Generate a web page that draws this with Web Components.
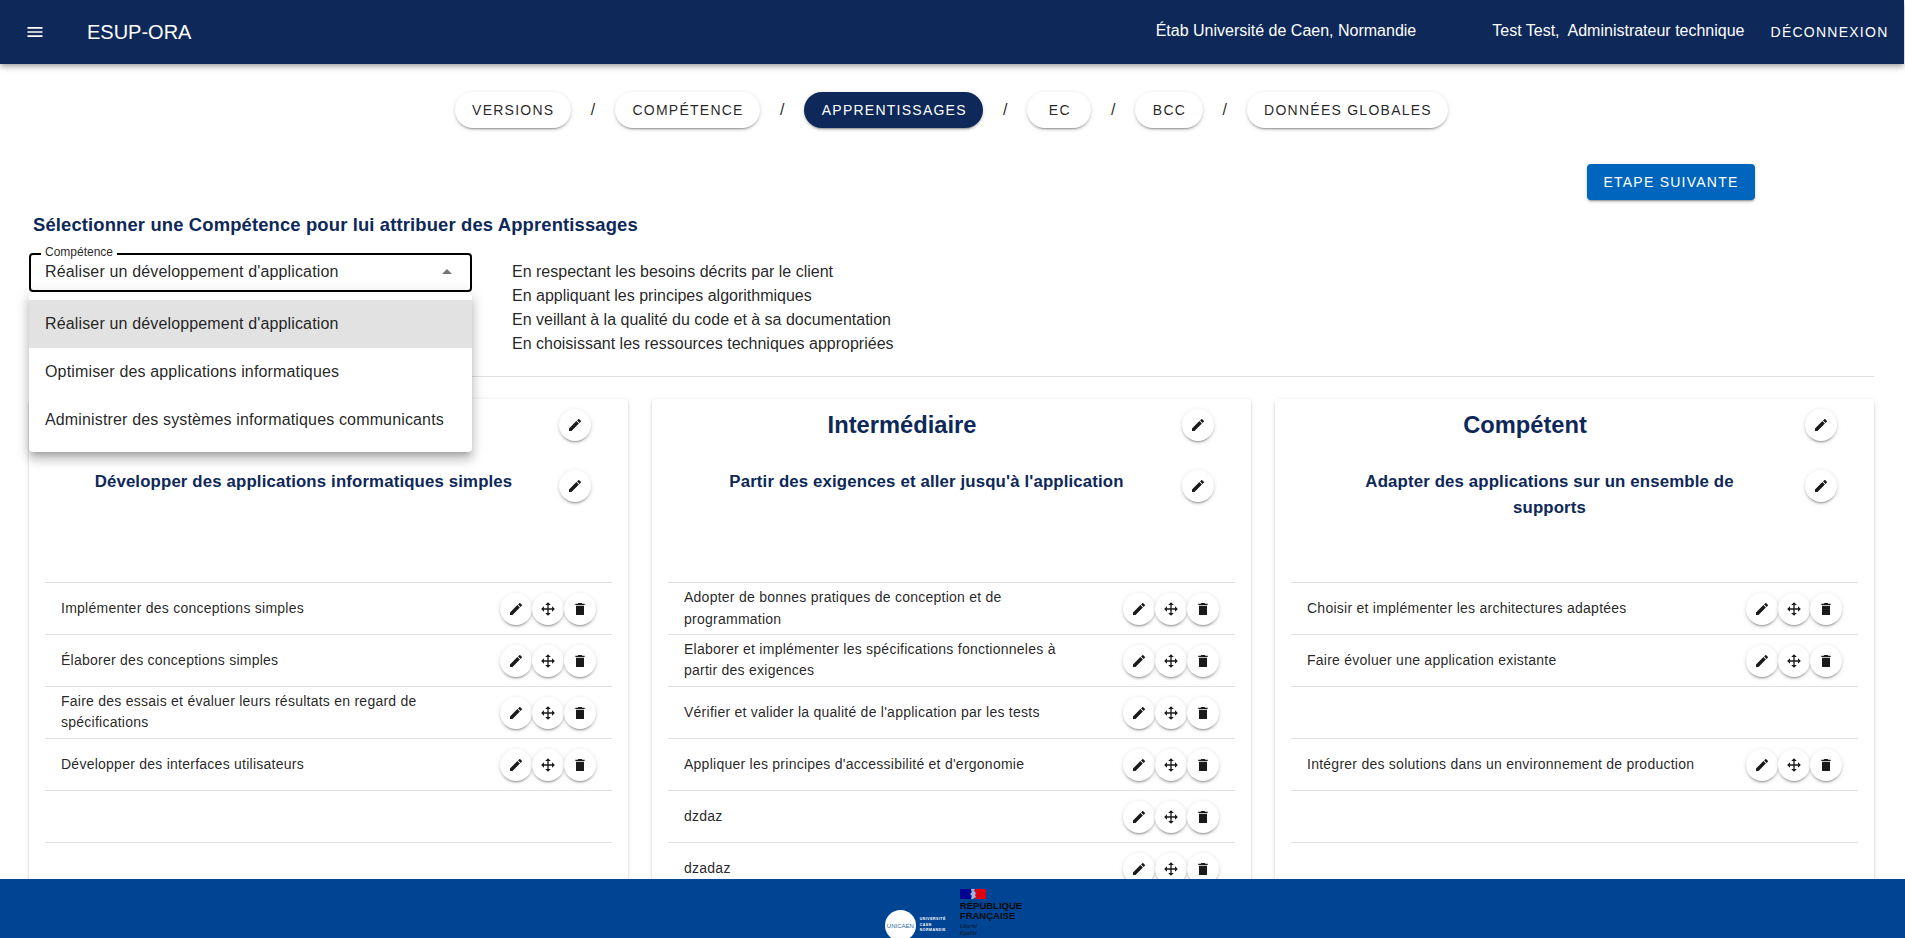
<!DOCTYPE html>
<html lang="fr">
<head>
<meta charset="utf-8">
<title>ESUP-ORA</title>
<style>
  html, body { margin: 0; height: 100%; }
  body {
    display: flex;
    flex-direction: column;
    height: 938px;
    overflow: hidden;
    font-family: "Liberation Sans", Arial, sans-serif;
    color: rgba(0, 0, 0, .87);
    background: #fff;
  }
  main {
    flex: 1;
    min-height: 0;
    overflow: hidden;
    padding: 0 31px 0 29px;
  }
</style>
</head>
<body>
  <app-header></app-header>
  <main>
    <step-nav>
      <step-tab>Versions</step-tab>
      <step-tab>Compétence</step-tab>
      <step-tab active>Apprentissages</step-tab>
      <step-tab>EC</step-tab>
      <step-tab>BCC</step-tab>
      <step-tab>Données globales</step-tab>
    </step-nav>
    <next-step>Etape suivante</next-step>
    <competence-panel></competence-panel>
    <level-board>
      <level-card title="" sub="Développer des applications informatiques simples">
        <skill-row>Implémenter des conceptions simples</skill-row>
        <skill-row>Élaborer des conceptions simples</skill-row>
        <skill-row>Faire des essais et évaluer leurs résultats en regard de spécifications</skill-row>
        <skill-row>Développer des interfaces utilisateurs</skill-row>
        <skill-row empty></skill-row>
        <skill-row empty></skill-row>
      </level-card>
      <level-card title="Intermédiaire" sub="Partir des exigences et aller jusqu'à l'application">
        <skill-row>Adopter de bonnes pratiques de conception et de programmation</skill-row>
        <skill-row>Elaborer et implémenter les spécifications fonctionneles à partir des exigences</skill-row>
        <skill-row>Vérifier et valider la qualité de l'application par les tests</skill-row>
        <skill-row>Appliquer les principes d'accessibilité et d'ergonomie</skill-row>
        <skill-row>dzdaz</skill-row>
        <skill-row>dzadaz</skill-row>
      </level-card>
      <level-card title="Compétent" sub="Adapter des applications sur un ensemble de supports">
        <skill-row>Choisir et implémenter les architectures adaptées</skill-row>
        <skill-row>Faire évoluer une application existante</skill-row>
        <skill-row empty></skill-row>
        <skill-row>Intégrer des solutions dans un environnement de production</skill-row>
        <skill-row empty></skill-row>
        <skill-row empty></skill-row>
      </level-card>
    </level-board>
  </main>
  <app-footer></app-footer>

<script>
const ICONS = {
  menu: "M3 18h18v-2H3v2zm0-5h18v-2H3v2zm0-7v2h18V6H3z",
  edit: "M20.71 7.04c.39-.39.39-1.04 0-1.41l-2.34-2.34c-.37-.39-1.02-.39-1.41 0l-1.84 1.83 3.75 3.75M3 17.25V21h3.75L17.81 9.93l-3.75-3.75L3 17.25z",
  move: "M13 6v5h5V7.75L22.25 12 18 16.25V13h-5v5h3.25L12 22.25 7.75 18H11v-5H6v3.25L1.75 12 6 7.75V11h5V6H7.75L12 1.75 16.25 6H13z",
  trash: "M6 7h12v14H6zM5 4h3.5l1-1h5l1 1H19v2H5z",
  up: "M7 14l5-5 5 5z",
};
const svgIcon = (name, size) =>
  `<svg width="${size}" height="${size}" viewBox="0 0 24 24" fill="currentColor"><path d="${ICONS[name]}"/></svg>`;

class AppHeader extends HTMLElement {
  constructor() {
    super();
    this.attachShadow({ mode: "open" }).innerHTML = `
    <style>
      :host {
        display: flex;
        align-items: center;
        flex: none;
        height: 64px;
        position: relative;
        z-index: 3;
        background: #0d2859;
        color: #fff;
        font-size: 16px;
        box-shadow: 0 2px 4px -1px rgba(0,0,0,.2), 0 4px 5px rgba(0,0,0,.14), 0 1px 10px rgba(0,0,0,.12);
        margin-right: 1px;
      }
      .menu { display: flex; margin-left: 25px; }
      .brand { font-size: 20px; margin-left: 42px; }
      .etab { margin-left: auto; margin-bottom: 2px; }
      .user { margin-left: 76px; margin-bottom: 2px; white-space: pre; }
      .logout {
        margin: 0 15.5px 0 26px;
        font-size: 14px;
        letter-spacing: 1.25px;
      }
    </style>
    <span class="menu">${svgIcon("menu", 20)}</span>
    <span class="brand">ESUP-ORA</span>
    <span class="etab">Étab Université de Caen, Normandie</span>
    <span class="user">Test Test,  Administrateur technique</span>
    <span class="logout">DÉCONNEXION</span>`;
  }
}

class StepNav extends HTMLElement {
  constructor() {
    super();
    this.attachShadow({ mode: "open" }).innerHTML = `
    <style>
      :host {
        display: flex;
        justify-content: center;
        align-items: center;
        margin-top: 28px;
        height: 36px;
      }
    </style>
    <slot></slot>`;
  }
}

class StepTab extends HTMLElement {
  constructor() {
    super();
    this.attachShadow({ mode: "open" }).innerHTML = `
    <style>
      :host { display: flex; align-items: center; }
      :host(:not(:last-child))::after {
        content: "/";
        width: 44px;
        text-align: center;
        font-size: 16px;
        color: rgba(0,0,0,.87);
      }
      .pill {
        height: 36px;
        min-width: 64px;
        box-sizing: border-box;
        padding: 0 16.5px 0 17.5px;
        display: flex;
        align-items: center;
        justify-content: center;
        border-radius: 18px;
        background: #fff;
        color: rgba(0,0,0,.87);
        font-size: 14px;
        letter-spacing: 1.25px;
        text-transform: uppercase;
        box-shadow: 0 3px 1px -2px rgba(0,0,0,.2), 0 2px 2px rgba(0,0,0,.14), 0 1px 5px rgba(0,0,0,.12);
      }
      :host([active]) .pill { background: #0d2859; color: #fff; }
    </style>
    <span class="pill"><slot></slot></span>`;
  }
}

class NextStep extends HTMLElement {
  constructor() {
    super();
    this.attachShadow({ mode: "open" }).innerHTML = `
    <style>
      :host {
        display: flex;
        justify-content: flex-end;
        margin: 36px 119px 0 0;
      }
      span {
        height: 36px;
        width: 168px;
        display: flex;
        align-items: center;
        justify-content: center;
        border-radius: 4px;
        background: #0066bd;
        color: #fff;
        font-size: 14px;
        letter-spacing: 1.25px;
        text-transform: uppercase;
        box-shadow: 0 3px 1px -2px rgba(0,0,0,.2), 0 2px 2px rgba(0,0,0,.14), 0 1px 5px rgba(0,0,0,.12);
      }
    </style>
    <span><slot></slot></span>`;
  }
}

class CompetencePanel extends HTMLElement {
  constructor() {
    super();
    const options = [
      "Réaliser un développement d'application",
      "Optimiser des applications informatiques",
      "Administrer des systèmes informatiques communicants",
    ];
    const criteria = [
      "En respectant les besoins décrits par le client",
      "En appliquant les principes algorithmiques",
      "En veillant à la qualité du code et à sa documentation",
      "En choisissant les ressources techniques appropriées",
    ];
    this.attachShadow({ mode: "open" }).innerHTML = `
    <style>
      :host {
        display: block;
        padding-bottom: 20px;
        border-bottom: 1px solid #e0e0e0;
      }
      h2 {
        margin: 14px 0 0 4px;
        font-size: 18.4px;
        line-height: 22px;
        color: #0d2859;
        letter-spacing: .15px;
      }
      .row { display: flex; margin-top: 17px; }
      .select {
        position: relative;
        width: 443px;
        height: 39px;
        box-sizing: border-box;
        border: 2px solid #000;
        border-radius: 4px;
        font-size: 16px;
        letter-spacing: .15px;
        display: flex;
        align-items: center;
        padding: 0 14px 2px;
        justify-content: space-between;
      }
      .label {
        position: absolute;
        left: 10px;
        top: -10px;
        padding: 0 4px;
        background: #fff;
        font-size: 12px;
        line-height: 14px;
        letter-spacing: 0;
      }
      .arrow { display: flex; color: rgba(0,0,0,.54); margin-right: -3px; }
      .menu {
        position: absolute;
        z-index: 2;
        left: -2px;
        right: -2px;
        top: 37px;
        padding: 8px 0;
        background: #fff;
        border-radius: 4px;
        box-shadow: 0 5px 5px -3px rgba(0,0,0,.2), 0 8px 10px 1px rgba(0,0,0,.14), 0 3px 14px 2px rgba(0,0,0,.12);
      }
      .menu div { height: 48px; line-height: 48px; padding: 0 16px; }
      .menu .on { background: #e2e2e2; }
      .criteria { margin: 0 0 0 40px; padding: 0; list-style: none; font-size: 16px; line-height: 24px; }
      .criteria li:first-child { margin-top: 7px; }
    </style>
    <h2>Sélectionner une Compétence pour lui attribuer des Apprentissages</h2>
    <div class="row">
      <div class="select">
        <span class="label">Compétence</span>
        <span>${options[0]}</span>
        <span class="arrow">${svgIcon("up", 24)}</span>
        <div class="menu">
          ${options.map((o, i) => `<div class="${i === 0 ? "on" : ""}">${o}</div>`).join("")}
        </div>
      </div>
      <ul class="criteria">${criteria.map((c) => `<li>${c}</li>`).join("")}</ul>
    </div>`;
  }
}

class LevelBoard extends HTMLElement {
  constructor() {
    super();
    this.attachShadow({ mode: "open" }).innerHTML = `
    <style>
      :host {
        display: grid;
        grid-template-columns: repeat(3, 1fr);
        gap: 24px;
        margin-top: 22px;
      }
    </style>
    <slot></slot>`;
  }
}

class RoundBtn extends HTMLElement {
  constructor() {
    super();
    this.attachShadow({ mode: "open" });
  }

  connectedCallback() {
    this.shadowRoot.innerHTML = `
    <style>
      :host {
        display: flex;
        flex: none;
        align-items: center;
        justify-content: center;
        width: 32px;
        height: 32px;
        border-radius: 50%;
        background: #fff;
        color: #1a1a1a;
        box-shadow: 0 3px 1px -2px rgba(0,0,0,.2), 0 2px 2px rgba(0,0,0,.14), 0 1px 5px rgba(0,0,0,.12);
      }
    </style>
    ${svgIcon(this.getAttribute("icon"), 16)}`;
  }
}

class LevelCard extends HTMLElement {
  constructor() {
    super();
    this.attachShadow({ mode: "open" });
  }

  connectedCallback() {
    this.shadowRoot.innerHTML = `
    <style>
      :host {
        display: block;
        height: 560px;
        padding: 10px 16px 0;
        background: #fff;
        border-radius: 4px;
        box-shadow: 0 3px 1px -2px rgba(0,0,0,.2), 0 2px 2px rgba(0,0,0,.14), 0 1px 5px rgba(0,0,0,.12);
      }
      .head { display: flex; align-items: center; height: 32px; padding-right: 21px; color: #0d2859; }
      h3 {
        flex: 1;
        margin: 0 46px 0 0;
        text-align: center;
        font-size: 23.7px;
        line-height: 32px;
      }
      .sub {
        display: flex;
        align-items: flex-start;
        height: 112px;
        margin-top: 29px;
        padding-right: 21px;
        color: #0d2859;
      }
      h4 {
        flex: 1;
        margin: -1px 0 0;
        padding: 0 35px 0 38px;
        text-align: center;
        font-size: 16.8px;
        line-height: 26px;
        letter-spacing: .15px;
      }
      .list { border-top: 1px solid #e0e0e0; }
    </style>
    <div class="head"><h3>${this.getAttribute("title")}</h3><round-btn icon="edit"></round-btn></div>
    <div class="sub"><h4>${this.getAttribute("sub")}</h4><round-btn icon="edit"></round-btn></div>
    <div class="list"><slot></slot></div>`;
  }
}

class SkillRow extends HTMLElement {
  constructor() {
    super();
    this.attachShadow({ mode: "open" });
  }

  connectedCallback() {
    const buttons = this.hasAttribute("empty") ? "" : `
      <round-btn icon="edit"></round-btn>
      <round-btn icon="move"></round-btn>
      <round-btn icon="trash"></round-btn>`;
    this.shadowRoot.innerHTML = `
    <style>
      :host {
        display: flex;
        align-items: center;
        height: 52px;
        box-sizing: border-box;
        border-bottom: 1px solid #e0e0e0;
        padding: 0 16px;
        font-size: 14px;
        line-height: 22px;
        letter-spacing: .25px;
      }
      .text { flex: 1; padding-right: 50px; margin-bottom: 2px; }
      .text.two { line-height: 21px; }
      .btns { display: flex; }
    </style>
    <span class="text ${this.textContent.length > 62 ? "two" : ""}"><slot></slot></span>
    <span class="btns">${buttons}</span>`;
  }
}

class AppFooter extends HTMLElement {
  constructor() {
    super();
    this.attachShadow({ mode: "open" }).innerHTML = `
    <style>
      :host {
        display: flex;
        flex: none;
        justify-content: center;
        gap: 10px;
        height: 59px;
        overflow: hidden;
        background: #004494;
        position: relative;
        z-index: 1;
      }
      .caen { display: flex; align-items: center; gap: 4px; margin-top: 31px; height: 31px; padding-left: 2px; }
      .disc {
        width: 31px;
        height: 31px;
        border-radius: 50%;
        background: #fff;
        color: #2c5f9e;
        font: 400 6px "Liberation Sans", sans-serif;
        display: flex;
        align-items: center;
        justify-content: center;
      }
      .caen small { color: #fff; font: 700 3.5px/5.5px "Liberation Sans", sans-serif; letter-spacing: .5px; width: 30px; }
      .rf { margin-top: 10px; }
      .rf svg { display: block; }
      .rf b { display: block; font: 700 9.5px/10px "Liberation Sans", sans-serif; color: #0a0a0a; margin-top: 2px; }
      .rf i { display: block; font: italic 6px/7px "Liberation Serif", serif; color: #111; margin-top: 2px; }
    </style>
    <div class="caen">
      <span class="disc">UNICAEN</span>
      <small>UNIVERSITÉ CAEN NORMANDIE</small>
    </div>
    <div class="rf">
      <svg width="26" height="10" viewBox="0 0 26 10">
        <rect width="11" height="10" fill="#000091"/>
        <rect x="11" width="4" height="10" fill="#004494"/>
        <rect x="15" width="11" height="10" fill="#e1000f"/>
        <path d="M11 0h4l-1 2 2 2-1 2 1 2-3 2h-2l1-3-2-2 2-2z" fill="#9db4d6"/>
      </svg>
      <b>RÉPUBLIQUE<br>FRANÇAISE</b>
      <i>Liberté<br>Égalité</i>
    </div>`;
  }
}

customElements.define("app-header", AppHeader);
customElements.define("step-nav", StepNav);
customElements.define("step-tab", StepTab);
customElements.define("next-step", NextStep);
customElements.define("competence-panel", CompetencePanel);
customElements.define("level-board", LevelBoard);
customElements.define("round-btn", RoundBtn);
customElements.define("level-card", LevelCard);
customElements.define("skill-row", SkillRow);
customElements.define("app-footer", AppFooter);
</script>
</body>
</html>
